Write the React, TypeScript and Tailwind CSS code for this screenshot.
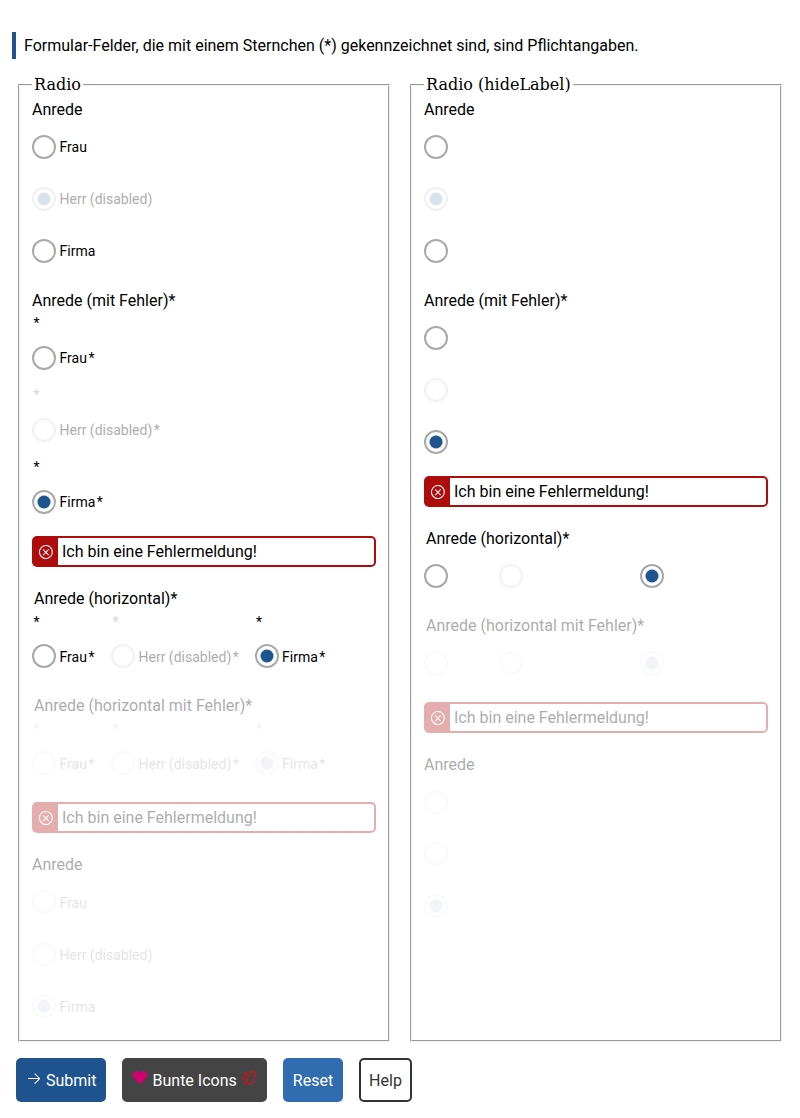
import { VscArrowRight, VscError } from "react-icons/vsc";

type Option = { label: string; disabled?: boolean; checked?: boolean };

const options = (checked?: number): Option[] => [
  { label: "Frau", checked: checked === 0 },
  { label: "Herr (disabled)", disabled: true, checked: checked === 1 },
  { label: "Firma", checked: checked === 2 },
];

function Circle({ checked, disabled }: { checked?: boolean; disabled?: boolean }) {
  return (
    <span
      role="radio"
      aria-checked={!!checked}
      className={`flex size-6 shrink-0 items-center justify-center rounded-full border-2 border-[#a9a9a9] ${disabled ? "opacity-[.165]" : ""}`}
    >
      {checked && <span className="size-3 rounded-full bg-[#1f5390] shadow-[0_0_1px_0.5px_#1f5390]" />}
    </span>
  );
}

type RadioProps = { option: Option; hideLabel?: boolean; required?: boolean; low?: boolean };

function Radio({ option, hideLabel, required, low }: RadioProps) {
  const dim = option.disabled;
  return (
    <div>
      {required && !hideLabel && (
        <div className={`h-5 pl-[1.5px] text-sm ${low ? "leading-6" : "leading-[22px]"} ${dim ? "opacity-[.165]" : ""}`}>*</div>
      )}
      <div className="flex h-[52px] items-center">
        <Circle checked={option.checked} disabled={dim} />
        {!hideLabel && (
          <span
            className={`ml-[3.5px] whitespace-nowrap text-sm leading-5 ${low ? "pt-0.5" : ""} ${dim ? "opacity-[.33]" : ""}`}
          >
            {option.label}
            {required && <span className="ml-[1.5px]">*</span>}
          </span>
        )}
      </div>
    </div>
  );
}

function Label({ children }: { children: string }) {
  return <div className="h-5 whitespace-nowrap text-base leading-[22px]">{children}</div>;
}

function ErrorBox() {
  return (
    <div className="flex h-[31px] rounded-[5px] border-2 border-[#ae0b0d]">
      <span className="flex w-6 shrink-0 items-center justify-center bg-[#ae0b0d] text-white">
        <VscError size={16} />
      </span>
      <span className="pl-1 text-base leading-[27px]">Ich bin eine Fehlermeldung!</span>
    </div>
  );
}

function Heart() {
  return (
    <svg width="16" height="16" viewBox="0 0 16 16" fill="#d3006f" className="-mt-1.5 mr-[4.5px]">
      <path d="M8 3.300C9 1.900 10.200 1.300 11.500 1.300c2.200 0 3.700 1.700 3.700 3.800 0 1.500-.7 2.700-1.700 3.700L8 14.200 2.500 8.800C1.500 7.800.8 6.600.8 5.100c0-2.100 1.500-3.800 3.700-3.800C5.800 1.300 7 1.900 8 3.300z" />
    </svg>
  );
}

function Squirrel() {
  return (
    <svg width="14" height="14" viewBox="0 0 14 14" fill="none" stroke="#d5101a" strokeWidth="1.1" strokeLinejoin="round" className="-mt-1.5 ml-[5px]">
      <path d="M.5 7.500 2.500 5V1.500l2 1.500C5.500 3.500 6 4.500 6 5.500L7.500 4.500v-3l1.500-1 1.500 1 1.500-1 1.500 2v2l-2 2 .5 2v2.500l-2 2H2.500v-1.500l3-.5V9.500H4.200l1.300-1H1.200z" />
    </svg>
  );
}

function Column({ title, hideLabel }: { title: string; hideLabel?: boolean }) {
  const columns = hideLabel
    ? "grid grid-cols-[75px_141px_auto] justify-start"
    : "grid grid-cols-[79px_143.5px_auto] justify-start";
  return (
    <fieldset className="mx-0.5 min-w-0 border-2 border-[#f0f0f0] px-3 pb-2 pt-1.5 [border-style:groove]">
      <legend className="h-[19px] px-0.5 font-['DejaVu_Serif',serif] text-base leading-[19px]">{title}</legend>
      <div className="h-5 leading-5">Anrede</div>
      <div className="pt-px">
        {options(1).map((o) => (
          <Radio key={o.label} option={o} hideLabel={hideLabel} />
        ))}
      </div>

      <div className="pt-[13px]">
        <Label>Anrede (mit Fehler)*</Label>
        <div className="pt-0.5">
          {options(2).map((o) => (
            <Radio key={o.label} option={o} hideLabel={hideLabel} required />
          ))}
        </div>
        <div className="pt-2">
          <ErrorBox />
        </div>
      </div>

      <div className="pt-[21px]">
        <div className="pl-0.5">
          <Label>Anrede (horizontal)*</Label>
        </div>
        <div className={`pt-0.5 ${columns}`}>
          {options(2).map((o) => (
            <Radio key={o.label} option={o} hideLabel={hideLabel} required low />
          ))}
        </div>
      </div>

      <div className="pt-[13px] opacity-[.33]">
        <div className="pl-0.5">
          <Label>Anrede (horizontal mit Fehler)*</Label>
        </div>
        <div className={`pt-0.5 ${columns}`}>
          {options(2).map((o) => (
            <Radio key={o.label} option={{ ...o, disabled: true }} hideLabel={hideLabel} required low />
          ))}
        </div>
        <div className="pt-[13px]">
          <ErrorBox />
        </div>
      </div>

      <div className="pt-[21px] opacity-[.33]">
        <Label>Anrede</Label>
        <div className="pt-0.5">
          {options(2).map((o) => (
            <Radio key={o.label} option={{ ...o, disabled: true }} hideLabel={hideLabel} low />
          ))}
        </div>
      </div>
    </fieldset>
  );
}

export default function App() {
  return (
    <div className="flex h-[1118px] w-[800px] flex-col bg-white font-[Roboto,sans-serif] text-base text-black">
      <p className="ml-3 mt-8 h-[27px] border-l-4 border-[#1f5390] pl-2 leading-[27px]">
        Formular-Felder, die mit einem Sternchen (*) gekennzeichnet sind, sind Pflichtangaben.
      </p>
      <div className="mx-4 mt-4 grid h-[967px] grid-cols-2 gap-4">
        <Column title="Radio" />
        <Column title="Radio (hideLabel)" hideLabel />
      </div>
      <div className="ml-4 mt-4 flex h-11 gap-4">
        <button className="flex w-[90px] items-center rounded-[5px] bg-[#1f5390] pl-2.5 pt-0.5 text-white">
          <VscArrowRight size={16} className="-mt-1.5 mr-1" />
          Submit
        </button>
        <button className="flex w-[145px] items-center rounded-[5px] bg-[#444] pl-2.5 pt-0.5 text-white">
          <Heart />
          Bunte Icons
          <Squirrel />
        </button>
        <button className="w-[60px] rounded-[5px] bg-[#316bb0] pt-0.5 text-white">Reset</button>
        <button className="w-[53px] rounded-[5px] border-2 border-[#333] bg-white pt-0.5 text-[#333]">Help</button>
      </div>
    </div>
  );
}
